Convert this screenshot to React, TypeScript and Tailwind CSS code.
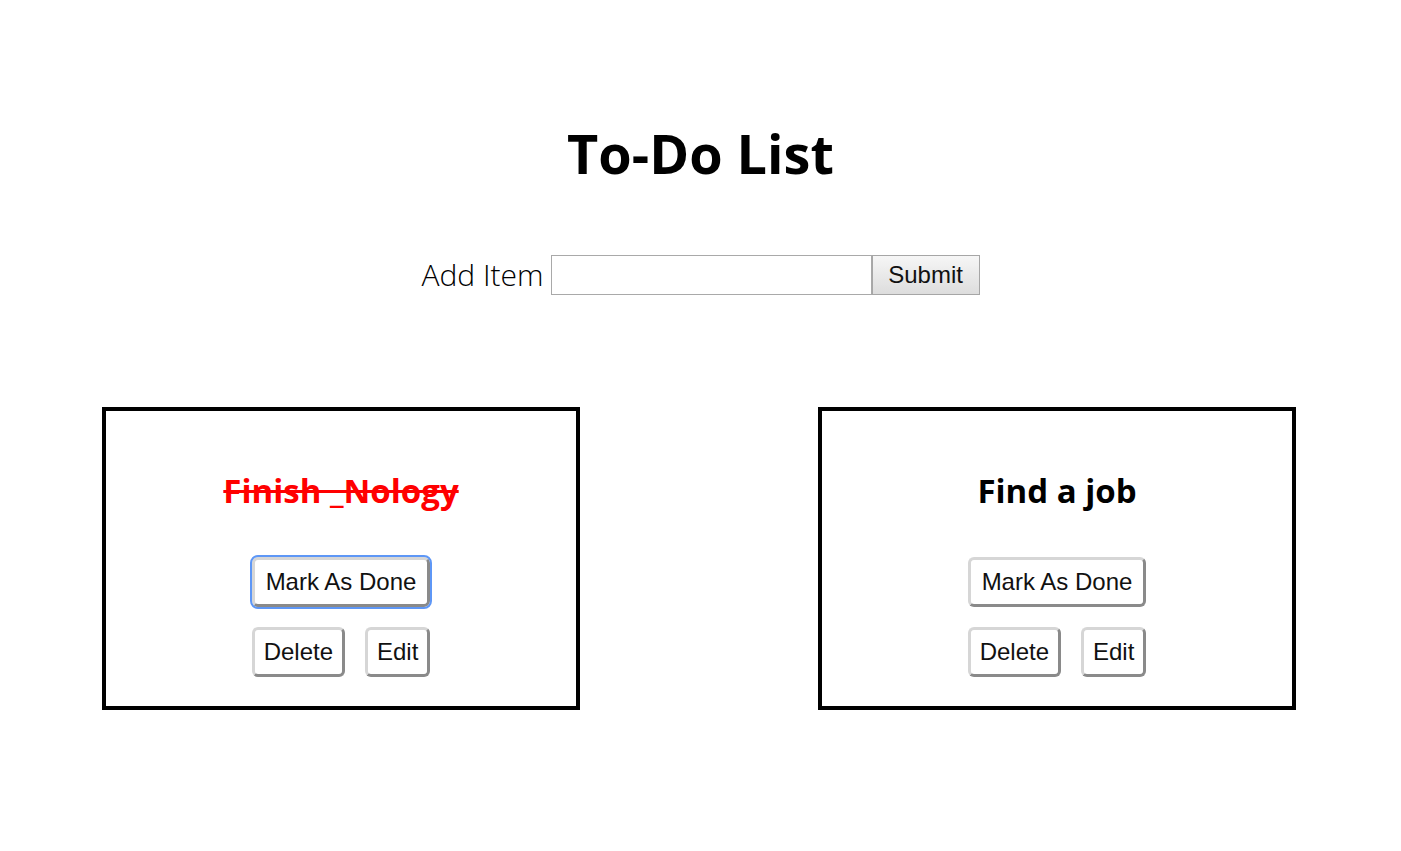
const todos = [
  { id: 1, text: "Finish _Nology", done: true },
  { id: 2, text: "Find a job", done: false },
];

const btn =
  "h-[50px] bg-white rounded-[6px] border-[3px] border-t-[#d6d6d6] border-l-[#d6d6d6] border-b-[#8a8a8a] border-r-[#8a8a8a] text-[24px] text-[#111] font-['Liberation_Sans',Arial,sans-serif] leading-none";

function TodoCard({ text, done, focused }: { text: string; done: boolean; focused?: boolean }) {
  return (
    <div className="w-[478px] h-[303px] border-4 border-black flex flex-col items-center">
      <h2
        className={
          "mt-[58px] text-[33px] leading-[44px] font-bold " +
          (done ? "text-[#ff0000] line-through decoration-[3px]" : "text-black")
        }
      >
        {text}
      </h2>
      <button
        className={
          btn +
          " px-[11px] mt-[44px]" +
          (focused ? " outline-2 outline-[#5e97f6] outline-offset-0" : "")
        }
      >
        Mark As Done
      </button>
      <div className="flex gap-[20px] mt-[20px]">
        <button className={btn + " px-[9px]"}>Delete</button>
        <button className={btn + " px-[9px]"}>Edit</button>
      </div>
    </div>
  );
}

export default function App() {
  return (
    <div className="min-h-[851px] bg-white text-black font-['Open_Sans','Noto_Sans',sans-serif]">
      <h1 className="pt-[115px] text-center text-[54px] leading-[76px] font-bold">To-Do List</h1>
      <form
        className="mt-[64px] flex items-center justify-center"
        onSubmit={(e) => e.preventDefault()}
      >
        <label htmlFor="item" className="text-[30px] font-light mr-[7px] leading-none">
          Add Item
        </label>
        <input
          id="item"
          type="text"
          className="w-[321px] h-[40px] border border-[#a9a9a9] bg-white outline-none"
        />
        <button
          type="submit"
          className="w-[108px] h-[40px] border border-[#a6a6a6] bg-gradient-to-b from-[#f6f6f6] to-[#dddddd] text-[24px] text-[#111] font-['Liberation_Sans',Arial,sans-serif]"
        >
          Submit
        </button>
      </form>
      <div className="mt-[112px] flex gap-[238px] pl-[102px]">
        {todos.map((t) => (
          <TodoCard key={t.id} text={t.text} done={t.done} focused={t.id === 1} />
        ))}
      </div>
    </div>
  );
}
